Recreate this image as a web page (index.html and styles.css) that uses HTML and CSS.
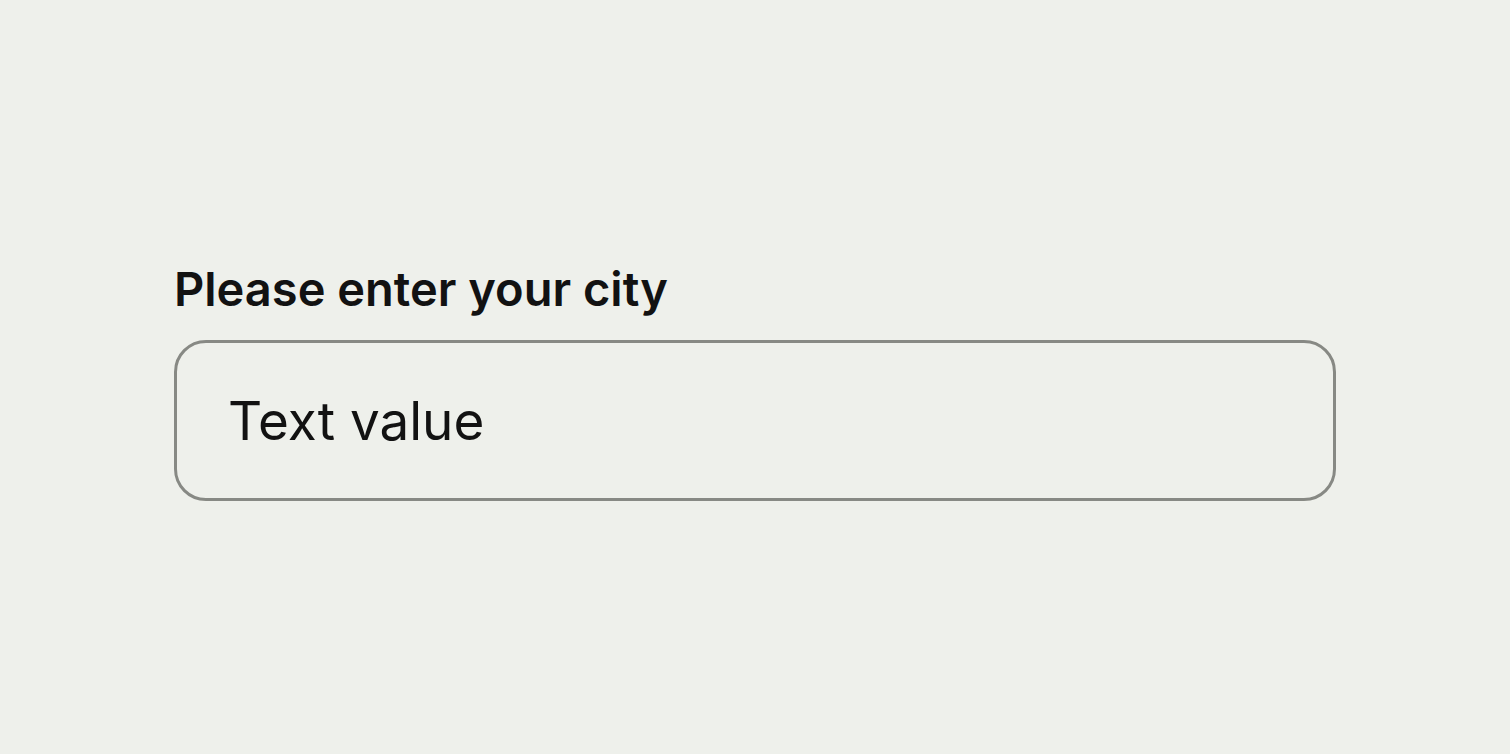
FILE: index.html
```html
<!DOCTYPE html>
<html lang="en">
<head>
<meta charset="utf-8">
<title>City field</title>
<link rel="stylesheet" href="styles.css">
</head>
<body>
<main class="page">
  <div class="field">
    <label class="field-label" for="city">Please enter your city</label>
    <input class="field-input" id="city" type="text" value="Text value">
  </div>
</main>
</body>
</html>
```
FILE: styles.css
```css
html, body {
  margin: 0;
  padding: 0;
  background: #eef0eb;
}
body {
  font-family: Inter, "Noto Sans", "Liberation Sans", sans-serif;
  color: #121212;
}
.page {
  padding: 261px 0 0 174px;
}
.field {
  display: flex;
  flex-direction: column;
  gap: 23px;
  width: 1162px;
}
.field-label {
  font-size: 47px;
  line-height: 56px;
  font-weight: 600;
  color: #121212;
}
.field-input {
  box-sizing: border-box;
  width: 1162px;
  height: 161px;
  margin: 0;
  padding: 0 51px;
  border: 3px solid #878984;
  border-radius: 32px;
  background: transparent;
  font-family: Inter, "Noto Sans", "Liberation Sans", sans-serif;
  font-size: 53px;
  font-weight: 400;
  color: #121212;
  outline: none;
}
```
